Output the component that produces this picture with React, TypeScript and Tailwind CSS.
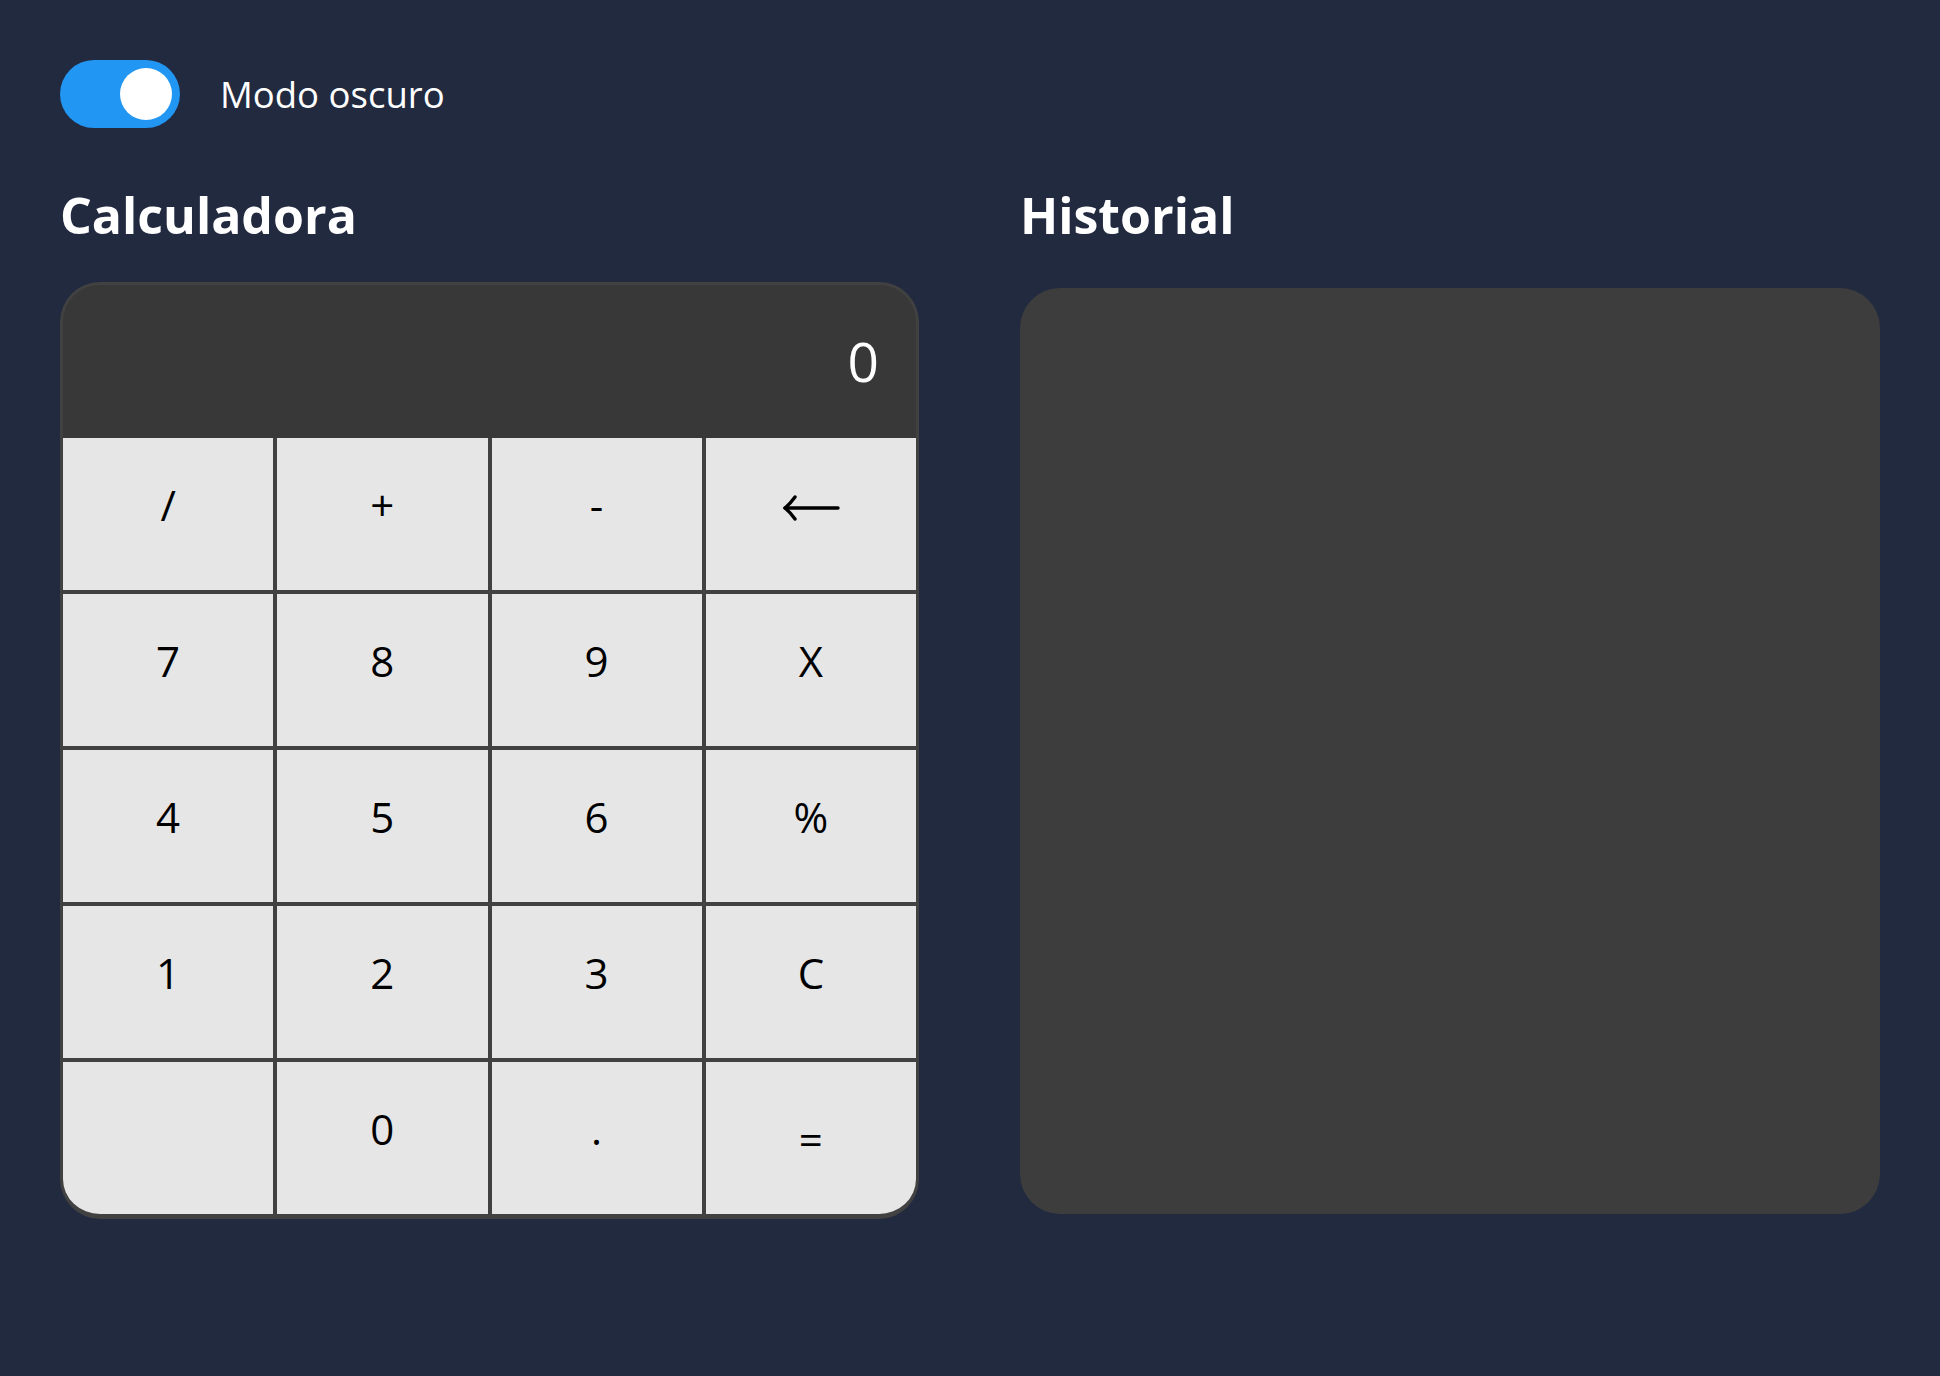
import React, { useState } from 'react';

const keys: string[] = ['/', '+', '-', 'back', '7', '8', '9', 'X', '4', '5', '6', '%', '1', '2', '3', 'C', '', '0', '.', '='];

const BackArrow: React.FC = () => (
  <svg width="58" height="26" viewBox="0 0 58 26" fill="none" stroke="#000" strokeWidth="3.4" strokeLinecap="round" strokeLinejoin="round">
    <path d="M3 13 H56" />
    <path d="M13 2 Q8 9 3 13 Q8 17 13 24" />
  </svg>
);

const App: React.FC = () => {
  const [dark, setDark] = useState(true);

  return (
    <div className="min-h-screen bg-[#222a40] px-[60px] pt-[60px] font-['Open_Sans',sans-serif] text-white">
      <div className="flex items-center h-[68px]">
        <button
          onClick={() => setDark(!dark)}
          className="w-[120px] h-[68px] rounded-full bg-[#2196f3] flex items-center justify-end pr-[8px]"
        >
          <span className="block w-[52px] h-[52px] rounded-full bg-white" />
        </button>
        <span className="ml-[40px] text-[36.5px]">Modo oscuro</span>
      </div>

      <div className="grid grid-cols-2 gap-[100px] mt-[62px]">
        <div className="flex flex-col">
          <h2 className="text-[50px] leading-[50px] h-[50px] font-bold">Calculadora</h2>
          <div className="mt-[42px] w-[859px] rounded-[40px] overflow-hidden border-[3px] border-b-[5px] border-[#414141] bg-[#414141]">
            <div className="h-[153px] bg-[#383838] flex items-center justify-end pr-[37px]">
              <span className="text-[55px] text-white">0</span>
            </div>
            <div className="grid grid-cols-4 gap-[4px]">
              {keys.map((k, i) => (
                <div
                  key={i}
                  className={`h-[152px] bg-[#e6e6e6] text-black text-[42px] flex items-center justify-center ${
                    k === '=' ? '' : k === 'back' ? 'pb-[12px]' : 'pb-[20px]'
                  }`}
                >
                  {k === 'back' ? <BackArrow /> : k}
                </div>
              ))}
            </div>
          </div>
        </div>

        <div className="flex flex-col">
          <h2 className="text-[50px] leading-[50px] h-[50px] font-bold">Historial</h2>
          <div className="mt-[48px] h-[926px] rounded-[40px] bg-[#3d3d3d]" />
        </div>
      </div>
    </div>
  );
};

export default App;
